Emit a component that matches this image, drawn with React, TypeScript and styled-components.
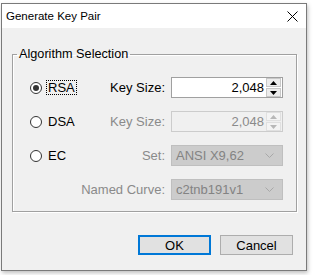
import styled, { createGlobalStyle } from "styled-components"

const GlobalStyle = createGlobalStyle`
  html, body {
    margin: 0;
    padding: 0;
    background: #ffffff;
    font-family: "Liberation Sans", Arial, sans-serif;
  }
`

const Page = styled.div`
  width: 313px;
  height: 275px;
  padding: 3px 0 0 1px;
  box-sizing: border-box;
  overflow: hidden;
`

const Window = styled.div`
  width: 306px;
  height: 268px;
  box-sizing: border-box;
  border: 1px solid #7a7a7a;
  background: #f0f0f0;
  display: flex;
  flex-direction: column;
  box-shadow: 1px 2px 4px rgba(0, 0, 0, 0.25);
`

const TitleBar = styled.div`
  height: 24px;
  background: #ffffff;
  display: flex;
  align-items: center;
  justify-content: space-between;
  padding: 0 8px 0 4px;
  font-size: 11.5px;
  color: #000;
`

const CloseIcon = () => (
  <svg width="11" height="11" viewBox="0 0 11 11">
    <path d="M0.5 0.5 L10.5 10.5 M10.5 0.5 L0.5 10.5" stroke="#000" strokeWidth="1" fill="none" />
  </svg>
)

const Body = styled.div`
  flex: 1;
  display: flex;
  flex-direction: column;
  padding: 19px 9px 0 10px;
`

const Group = styled.fieldset`
  margin: 0;
  padding: 0;
  border: 1px solid #a0a0a0;
  box-shadow: inset 1px 1px 0 #fff, 1px 1px 0 #fff;
  min-width: 0;
`

const Legend = styled.legend`
  margin-left: 4px;
  padding: 0 2px;
  font-size: 12.7px;
  line-height: 15px;
  color: #000;
`

const Grid = styled.div`
  display: grid;
  grid-template-columns: 44px 1fr 112px;
  grid-auto-rows: 21px;
  column-gap: 6px;
  row-gap: 13px;
  padding: 15px 13px 11px 17px;
`

const RadioLabel = styled.label`
  display: flex;
  align-items: center;
  gap: 5px;
  font-size: 13px;
  color: #000;
  grid-column: 1;
`

const RadioDot = styled.span<{ $checked?: boolean }>`
  width: 12px;
  height: 12px;
  flex: none;
  box-sizing: border-box;
  border-radius: 50%;
  border: 1px solid #333;
  background: #fff;
  display: flex;
  align-items: center;
  justify-content: center;
  &::after {
    content: '';
    width: 6px;
    height: 6px;
    border-radius: 50%;
    background: ${p => (p.$checked ? "#333" : "transparent")};
  }
`

const RadioText = styled.span<{ $focused?: boolean }>`
  padding: 0 1px;
  line-height: 13px;
  outline: ${p => (p.$focused ? "1px dotted #000" : "none")};
`

const FieldLabel = styled.span<{ $disabled?: boolean }>`
  grid-column: 2;
  align-self: center;
  text-align: right;
  font-size: 13px;
  white-space: nowrap;
  color: ${p => (p.$disabled ? "#8a8a8a" : "#000")};
`

const Spin = styled.div<{ $disabled?: boolean }>`
  grid-column: 3;
  display: flex;
  box-sizing: border-box;
  border: 1px solid ${p => (p.$disabled ? "#cccccc" : "#a0a0a0")};
  background: ${p => (p.$disabled ? "#f0f0f0" : "#ffffff")};
`

const SpinValue = styled.span<{ $disabled?: boolean }>`
  flex: 1;
  text-align: right;
  font-size: 13px;
  line-height: 19px;
  padding-right: 2px;
  color: ${p => (p.$disabled ? "#8a8a8a" : "#000")};
`

const SpinButtons = styled.div`
  width: 15px;
  display: flex;
  flex-direction: column;
  gap: 1px;
  padding: 0 1px 0 0;
`

const SpinButton = styled.div<{ $disabled?: boolean }>`
  flex: 1;
  display: flex;
  align-items: center;
  justify-content: center;
  background: ${p => (p.$disabled ? "#f4f4f4" : "#ececec")};
  border: 1px solid ${p => (p.$disabled ? "#e0e0e0" : "#c8c8c8")};
`

const Arrow = ({ up, color }: { up?: boolean; color: string }) => (
  <svg width="7" height="4" viewBox="0 0 7 4">
    <path d={up ? "M0 4 L3.5 0 L7 4 Z" : "M0 0 L3.5 4 L7 0 Z"} fill={color} />
  </svg>
)

const Select = styled.div`
  grid-column: 3;
  display: flex;
  align-items: center;
  justify-content: space-between;
  box-sizing: border-box;
  border: 1px solid #bfbfbf;
  background: #cccccc;
  padding: 0 8px 0 4px;
  font-size: 13px;
  color: #838383;
`

const Chevron = () => (
  <svg width="9" height="5" viewBox="0 0 9 5">
    <path d="M0.5 0.5 L4.5 4.5 L8.5 0.5" stroke="#a8a8a8" strokeWidth="1" fill="none" />
  </svg>
)

const Buttons = styled.div`
  display: flex;
  justify-content: flex-end;
  gap: 9px;
  margin-top: 23px;
  padding-right: 4px;
`

const Button = styled.button<{ $default?: boolean }>`
  width: 73px;
  height: 20px;
  box-sizing: border-box;
  margin: 0;
  padding: 0;
  font-family: "Liberation Sans", Arial, sans-serif;
  font-size: 13px;
  color: #000;
  background: #e1e1e1;
  border: ${p => (p.$default ? "2px solid #0078d7" : "1px solid #adadad")};
`

const SpinBox = ({ value, disabled }: { value: string; disabled?: boolean }) => {
  const arrow = disabled ? "#b8b8b8" : "#000"
  return (
    <Spin $disabled={disabled}>
      <SpinValue $disabled={disabled}>{value}</SpinValue>
      <SpinButtons>
        <SpinButton $disabled={disabled}><Arrow up color={arrow} /></SpinButton>
        <SpinButton $disabled={disabled}><Arrow color={arrow} /></SpinButton>
      </SpinButtons>
    </Spin>
  )
}

export default function App() {
  return (
    <>
      <GlobalStyle />
      <Page>
        <Window>
          <TitleBar>
            <span>Generate Key Pair</span>
            <CloseIcon />
          </TitleBar>
          <Body>
            <Group>
              <Legend>Algorithm Selection</Legend>
              <Grid>
                <RadioLabel>
                  <RadioDot $checked />
                  <RadioText $focused>RSA</RadioText>
                </RadioLabel>
                <FieldLabel>Key Size:</FieldLabel>
                <SpinBox value="2,048" />

                <RadioLabel>
                  <RadioDot />
                  <RadioText>DSA</RadioText>
                </RadioLabel>
                <FieldLabel $disabled>Key Size:</FieldLabel>
                <SpinBox value="2,048" disabled />

                <RadioLabel>
                  <RadioDot />
                  <RadioText>EC</RadioText>
                </RadioLabel>
                <FieldLabel $disabled>Set:</FieldLabel>
                <Select>
                  <span>ANSI X9,62</span>
                  <Chevron />
                </Select>

                <FieldLabel $disabled>Named Curve:</FieldLabel>
                <Select>
                  <span>c2tnb191v1</span>
                  <Chevron />
                </Select>
              </Grid>
            </Group>
            <Buttons>
              <Button $default>OK</Button>
              <Button>Cancel</Button>
            </Buttons>
          </Body>
        </Window>
      </Page>
    </>
  )
}
